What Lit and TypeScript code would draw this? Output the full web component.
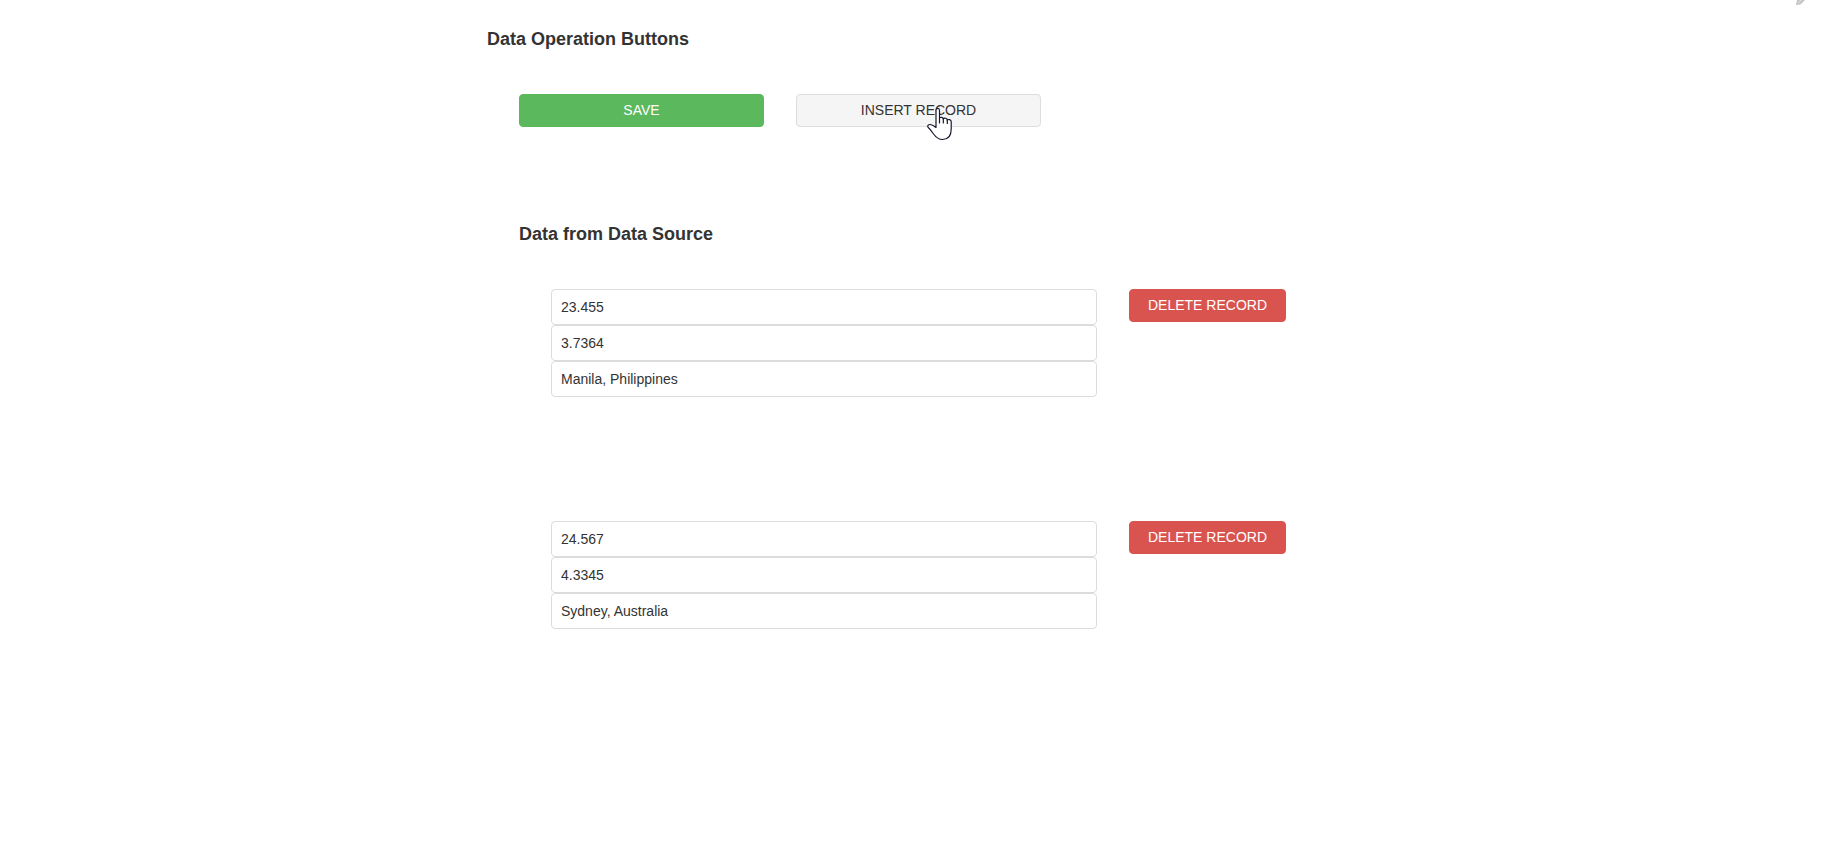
import { LitElement, html, css } from "lit";
import { customElement, state } from "lit/decorators.js";

interface DataRecord {
  fields: string[];
}

const FIELD_NAMES = ["First value", "Second value", "Location"];

@customElement("app-root")
export class AppRoot extends LitElement {
  static styles = css`
    :host {
      display: block;
      position: relative;
      box-sizing: border-box;
      min-height: 100vh;
      padding: 29px 0 29px 7px;
      overflow: hidden;
      background: #fff;
      color: #333;
      font: 14px/20px "Liberation Sans", Arial, sans-serif;
    }
    .form {
      max-width: 863px;
      margin: 0 auto;
    }
    .title {
      margin: 0 0 45px;
      font-size: 18px;
      line-height: 20px;
      font-weight: 700;
    }
    .actions {
      display: grid;
      grid-template-columns: repeat(3, 1fr);
      gap: 32px;
      margin: 0 32px 97px;
    }
    .source {
      margin: 0 32px;
    }
    .records {
      display: grid;
      gap: 124px;
      margin: 0 32px;
    }
    .record {
      display: grid;
      grid-template-columns: 1fr 157px;
      gap: 32px;
      align-items: start;
    }
    .fields {
      display: grid;
    }
    .field {
      box-sizing: border-box;
      width: 100%;
      min-width: 0;
      height: 36px;
      margin: 0;
      padding: 0 9px;
      border: 1px solid #dcdcdc;
      border-radius: 4px;
      background: #fff;
      color: inherit;
      font: inherit;
    }
    .button {
      position: relative;
      box-sizing: border-box;
      height: 33px;
      margin: 0;
      padding: 0 8px 2px;
      border: 1px solid transparent;
      border-radius: 4px;
      font: inherit;
      text-transform: uppercase;
      cursor: pointer;
    }
    .save {
      background: #5cb85c;
      border-color: #5cb85c;
      color: #fff;
    }
    .insert {
      background: #f5f5f5;
      border-color: #ddd;
      color: #333;
    }
    .delete {
      background: #d9534f;
      border-color: #d9534f;
      color: #fff;
    }
    .pointer {
      position: absolute;
      left: 129px;
      top: 11px;
      width: 28px;
      height: 36px;
      pointer-events: none;
    }
    .edit {
      position: absolute;
      right: 24px;
      top: 0;
      width: 11px;
      height: 6px;
    }
  `;

  @state() private records: DataRecord[] = [
    { fields: ["23.455", "3.7364", "Manila, Philippines"] },
    { fields: ["24.567", "4.3345", "Sydney, Australia"] },
  ];

  private insertRecord() {
    this.records = [...this.records, { fields: ["", "", ""] }];
  }

  private deleteRecord(record: DataRecord) {
    this.records = this.records.filter((item) => item !== record);
  }

  private updateField(record: DataRecord, index: number, event: Event) {
    record.fields[index] = (event.target as HTMLInputElement).value;
  }

  private renderRecord(record: DataRecord, row: number) {
    return html`
      <div class="record">
        <div class="fields">
          ${record.fields.map(
            (value, index) => html`<input
              class="field"
              type="text"
              aria-label="${FIELD_NAMES[index]}, record ${row + 1}"
              .value=${value}
              @input=${(event: Event) => this.updateField(record, index, event)}
            />`
          )}
        </div>
        <button class="button delete" type="button" @click=${() => this.deleteRecord(record)}>
          Delete Record
        </button>
      </div>
    `;
  }

  render() {
    return html`
      <svg class="edit" viewBox="0 0 11 6" aria-hidden="true">
        <path d="M2 0 L1 5 L5.5 4.4 L10 0 Z" fill="#c4c4c4" />
        <path d="M3.4 2.8 L6.2 0" fill="none" stroke="#ececec" stroke-width="1" />
      </svg>
      <main class="form">
        <h2 class="title">Data Operation Buttons</h2>
        <div class="actions">
          <button class="button save" type="button">Save</button>
          <button class="button insert" type="button" @click=${this.insertRecord}>
            Insert Record
            <svg class="pointer" viewBox="0 0 28 36" aria-hidden="true">
              <path
                d="M10 21.5 V4.4 C10 1.8 13.5 1.8 13.5 4.4 V12 C14.2 10.8 17.3 11 17.3 13 C18.2 11.6 21.3 12 21.3 14.2 C22.2 13 25.2 13.4 25.2 15.8 V23 C25.2 29.5 22.3 33.5 16.5 33.5 C11.8 33.5 9.6 30.8 7.6 28 C5.6 25 4.2 23 2 21.2 C0.8 19.2 3.2 18 5.2 18.8 C7.2 19.4 8.6 20.4 10 21.5 Z"
                fill="#fff"
                stroke="#17172b"
                stroke-width="1.2"
                stroke-linejoin="round"
              />
              <path
                d="M13.5 12 V17 M17.3 13 V17 M21.3 14.2 V17.5"
                fill="none"
                stroke="#17172b"
                stroke-width="1.2"
                stroke-linecap="round"
              />
            </svg>
          </button>
        </div>
        <section class="source">
          <h2 class="title">Data from Data Source</h2>
          <div class="records">
            ${this.records.map((record, row) => this.renderRecord(record, row))}
          </div>
        </section>
      </main>
    `;
  }
}
